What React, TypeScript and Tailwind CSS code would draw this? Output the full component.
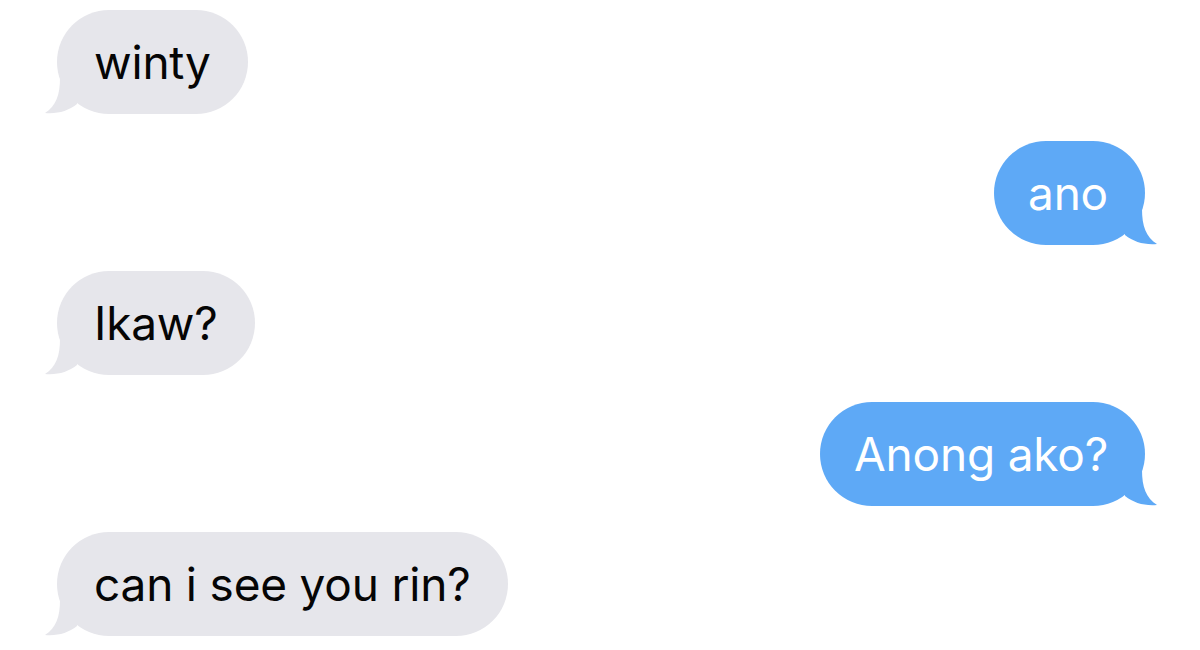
import React from 'react';

type Msg = { text: string; mine: boolean };

const messages: Msg[] = [
  { text: 'winty', mine: false },
  { text: 'ano', mine: true },
  { text: 'Ikaw?', mine: false },
  { text: 'Anong ako?', mine: true },
  { text: 'can i see you rin?', mine: false },
];

const Tail: React.FC<{ mine: boolean }> = ({ mine }) => (
  <svg
    width="36"
    height="36"
    viewBox="0 0 36 36"
    className={
      mine
        ? 'absolute bottom-0 -right-[12px] fill-[#5ea9f6] -scale-x-100'
        : 'absolute bottom-0 -left-[12px] fill-[#e6e6eb]'
    }
  >
    <path d="M15 0 C15 17 11 28 0 35 C13 36 23 33 32 26 L32 0 Z" />
  </svg>
);

const Bubble: React.FC<{ msg: Msg }> = ({ msg }) => (
  <div className={msg.mine ? 'flex justify-end' : 'flex justify-start'}>
    <div
      className={
        msg.mine
          ? 'relative h-[104px] flex items-center pl-[34px] pr-[37px] rounded-[52px] bg-[#5ea9f6] text-white'
          : 'relative h-[104px] flex items-center px-[37px] rounded-[52px] bg-[#e6e6eb] text-[#050505]'
      }
    >
      <Tail mine={msg.mine} />
      <span className="relative text-[46px] leading-none tracking-[-0.2px]">{msg.text}</span>
    </div>
  </div>
);

export default function App() {
  return (
    <div
      className="w-[1200px] h-[650px] bg-white overflow-hidden pt-[10px] pl-[57px] pr-[55px] flex flex-col gap-[26.5px]"
      style={{ fontFamily: 'Inter, "Noto Sans", sans-serif' }}
    >
      {messages.map((m, i) => (
        <Bubble key={i} msg={m} />
      ))}
    </div>
  );
}
